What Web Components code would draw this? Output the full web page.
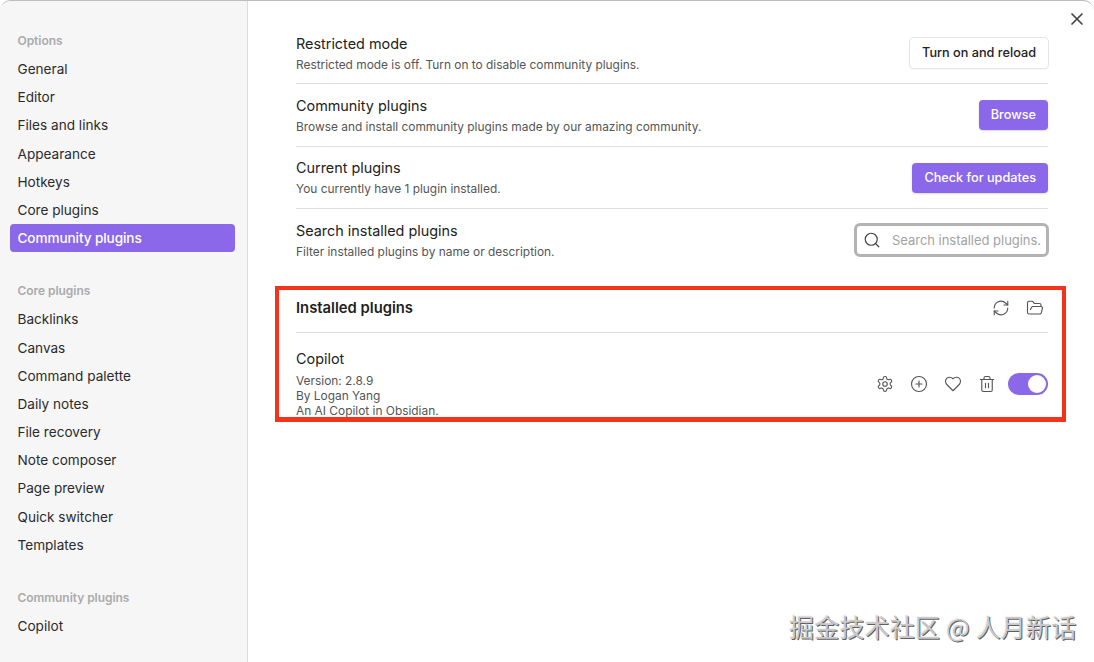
<!DOCTYPE html>
<html lang="en"><head><meta charset="utf-8"><title>Settings</title>
<style>
html,body{margin:0;height:100%;background:#fff}
body{font-family:Inter,"Liberation Sans",sans-serif;color:#222;overflow:hidden}
</style></head><body>
<settings-modal>
  <settings-sidebar slot="side">
    <nav-title first>Options</nav-title>
    <nav-item>General</nav-item><nav-item>Editor</nav-item><nav-item>Files and links</nav-item><nav-item>Appearance</nav-item><nav-item>Hotkeys</nav-item><nav-item>Core plugins</nav-item><nav-item active>Community plugins</nav-item>
    <nav-title>Core plugins</nav-title>
    <nav-item>Backlinks</nav-item><nav-item>Canvas</nav-item><nav-item>Command palette</nav-item><nav-item>Daily notes</nav-item><nav-item>File recovery</nav-item><nav-item>Note composer</nav-item><nav-item>Page preview</nav-item><nav-item>Quick switcher</nav-item><nav-item>Templates</nav-item>
    <nav-title>Community plugins</nav-title>
    <nav-item>Copilot</nav-item>
  </settings-sidebar>
  <setting-row name="Restricted mode" desc="Restricted mode is off. Turn on to disable community plugins." h="83" pad="22"><ui-button>Turn on and reload</ui-button></setting-row>
  <setting-row name="Community plugins" desc="Browse and install community plugins made by our amazing community." h="63"><ui-button cta>Browse</ui-button></setting-row>
  <setting-row name="Current plugins" desc="You currently have 1 plugin installed." h="62"><ui-button cta>Check for updates</ui-button></setting-row>
  <setting-row name="Search installed plugins" desc="Filter installed plugins by name or description." h="62" last><search-box></search-box></setting-row>
  <installed-plugins></installed-plugins>
</settings-modal>
<script>
const I=(d,s=18,w=1.5)=>`<svg width="${s}" height="${s}" viewBox="0 0 24 24" fill="none" stroke="currentColor" stroke-width="${w}" stroke-linecap="round" stroke-linejoin="round">${d}</svg>`;
const def=(n,html,init)=>customElements.define(n,class extends HTMLElement{constructor(){super();this.attachShadow({mode:'open'}).innerHTML=html}
 connectedCallback(){if(init)this.shadowRoot.innerHTML=init(this)}});
def('settings-modal',`<style>
:host{display:flex;position:relative;width:1094px;height:662px;box-sizing:border-box;background:#fff;border-top:1px solid #bdbdbd;border-radius:11px 11px 0 0;overflow:hidden}
.side{display:block;flex:none}
main{flex:1;min-width:0;padding:0 46px 0 48px;display:flex;flex-direction:column}
.close{position:absolute;left:1069px;top:10px;color:#444;width:16px;height:16px}
.mark{position:absolute;left:789px;top:607px;font:25px/36px "Noto Sans CJK SC",sans-serif;color:#c9c9c9;white-space:nowrap;text-shadow:1px 1px 0 #5f5f5f,-1px -1px 0 #f4f4f4;letter-spacing:.2px}
.box{position:absolute;left:275px;top:285px;width:791px;height:136px;box-sizing:border-box;border:4px solid #f5331b;border-bottom-width:5px;pointer-events:none}
</style><div class="side"><slot name="side"></slot></div><main><slot></slot></main>
<svg class="close" viewBox="0 0 16 16" fill="none" stroke="currentColor" stroke-width="1.7" stroke-linecap="round"><path d="M3 3l10 10M13 3L3 13"/></svg>
<div class="box"></div><div class="mark">掘金技术社区 @ 人月新话</div>`);
def('settings-sidebar',`<style>:host{display:block;box-sizing:border-box;width:248px;height:661px;padding:26px 12px 0 10px;background:#f6f6f7;border-right:1px solid #dcdcdc}</style><slot></slot>`);
def('nav-title',`<style>:host{display:block;font:600 12px/17px Inter,"Liberation Sans",sans-serif;letter-spacing:-.05px;color:#ababab;padding:5px 7.5px 6px;margin-top:25px}:host([first]){margin-top:0}</style><slot></slot>`);
def('nav-item',`<style>:host{display:block;height:28.2px;box-sizing:border-box;padding:0 7.5px;border-radius:4px;font:13.6px/28.5px Inter,"Liberation Sans",sans-serif;color:#2b2b2b}:host([active]){background:#8b68ea;color:#fff;font-weight:500;letter-spacing:-.1px}</style><slot></slot>`);
def('setting-row','',el=>`<style>:host{display:flex;align-items:center;justify-content:space-between;box-sizing:border-box;height:${el.getAttribute('h')}px;padding-top:${el.getAttribute('pad')||0}px;border-bottom:1px solid #dedede}
:host([last]){border-bottom:0}
.n{font:14.4px/20px Inter,"Liberation Sans",sans-serif;color:#222}.d{font:11.9px/17px Inter,"Liberation Sans",sans-serif;color:#555;margin-top:2px}
</style><div><div class="n">${el.getAttribute('name')}</div><div class="d">${el.getAttribute('desc')}</div></div><slot></slot>`);
def('ui-button',`<style>:host{display:inline-block;box-sizing:border-box;height:30px;padding:0 12px;border-radius:4px;font:500 12.7px/30px Inter,"Liberation Sans",sans-serif;background:#fff;color:#222;box-shadow:0 0 0 1px #e4e4e4,0 1px 2px rgba(0,0,0,.1)}
:host([cta]){background:#8b68ea;color:#fff;box-shadow:0 1px 2px rgba(0,0,0,.15)}</style><slot></slot>`);
def('search-box',`<style>:host{display:flex;align-items:center;box-sizing:border-box;width:195px;height:34px;margin-right:-1px;padding-left:6px;gap:11px;border:3px solid #b3b3b3;border-radius:6px;background:#fff;color:#444}
span{font:13px Inter,"Liberation Sans",sans-serif;color:#a3a3a3;white-space:nowrap;letter-spacing:-.03px}</style>${I('<circle cx="11" cy="11" r="8"/><path d="M21 21l-4.3-4.3"/>',18,1.6)}<span>Search installed plugins.</span>`);
def('icon-btn','',el=>`<style>:host{display:inline-flex;color:#555}</style>${I(el.getAttribute('d'),+el.getAttribute('s')||18,1.5)}`);
def('ui-toggle',`<style>:host{display:block;position:relative;width:40px;height:22px;border-radius:11px;background:#8b68ea}
i{position:absolute;right:2px;top:2px;width:18px;height:18px;border-radius:50%;background:#fff}</style><i></i>`);
const gear='<path d="M12.2 2h-.4a2 2 0 0 0-2 2v.2a2 2 0 0 1-1 1.7l-.4.2a2 2 0 0 1-2 0l-.2-.1a2 2 0 0 0-2.7.7l-.2.4a2 2 0 0 0 .7 2.7l.2.1a2 2 0 0 1 1 1.7v.5a2 2 0 0 1-1 1.8l-.2.1a2 2 0 0 0-.7 2.7l.2.4a2 2 0 0 0 2.7.7l.2-.1a2 2 0 0 1 2 0l.4.2a2 2 0 0 1 1 1.7v.2a2 2 0 0 0 2 2h.4a2 2 0 0 0 2-2v-.2a2 2 0 0 1 1-1.7l.4-.2a2 2 0 0 1 2 0l.2.1a2 2 0 0 0 2.7-.7l.2-.4a2 2 0 0 0-.7-2.7l-.2-.1a2 2 0 0 1-1-1.8v-.5a2 2 0 0 1 1-1.7l.2-.1a2 2 0 0 0 .7-2.7l-.2-.4a2 2 0 0 0-2.7-.7l-.2.1a2 2 0 0 1-2 0l-.4-.2a2 2 0 0 1-1-1.7V4a2 2 0 0 0-2-2z"/><circle cx="12" cy="12" r="3"/>';
def('installed-plugins',`<style>:host{display:block;margin-top:13px}
.head{display:flex;align-items:center;justify-content:space-between;height:48px;border-bottom:1px solid #dedede}
h2{margin:0;font:600 14.8px/20px Inter,"Liberation Sans",sans-serif;color:#1f1f1f}
.tools{display:flex;gap:16px;margin-right:4px}
.item{display:flex;align-items:center;justify-content:space-between;margin-top:16px}
.n{font:14.4px/20px Inter,"Liberation Sans",sans-serif;color:#222;margin-bottom:4px}.d{font:11.9px/15.2px Inter,"Liberation Sans",sans-serif;color:#555}
.ctl{display:flex;align-items:center;gap:16px;margin-top:1px}
ui-toggle{margin-left:-4px}
</style><div class="head"><h2>Installed plugins</h2><div class="tools">
<icon-btn d='<path d="M21 3v5h-5"/><path d="M3 12a9 9 0 0 1 15-6.7L21 8"/><path d="M21 12a9 9 0 0 1-15 6.7L3 16"/><path d="M8 16H3v5"/>'></icon-btn>
<icon-btn d='<path d="M6 14l1.5-3A2 2 0 0 1 9.2 10H20a2 2 0 0 1 1.9 2.5l-1.500 6A2 2 0 0 1 18.500 20H4a2 2 0 0 1-2-2V5a2 2 0 0 1 2-2h3.900a2 2 0 0 1 1.700.9l.8 1.200A2 2 0 0 0 12.100 6H18a2 2 0 0 1 2 2v2"/>'></icon-btn>
</div></div>
<div class="item"><div><div class="n">Copilot</div><div class="d">Version: 2.8.9</div><div class="d">By Logan Yang</div><div class="d">An AI Copilot in Obsidian.</div></div>
<div class="ctl"><icon-btn d='${gear}'></icon-btn>
<icon-btn d='<circle cx="12" cy="12" r="10"/><path d="M8 12h8M12 8v8"/>'></icon-btn>
<icon-btn d='<path d="M19 14c1.500-1.500 3-3.200 3-5.500A5.500 5.500 0 0 0 16.500 3c-1.800 0-3 .5-4.500 2-1.500-1.500-2.700-2-4.500-2A5.500 5.500 0 0 0 2 8.500c0 2.300 1.500 4 3 5.500l7 7z"/>'></icon-btn>
<icon-btn d='<path d="M3 6h18M19 6v14a2 2 0 0 1-2 2H7a2 2 0 0 1-2-2V6M8 6V4a2 2 0 0 1 2-2h4a2 2 0 0 1 2 2v2M10 11v6M14 11v6"/>'></icon-btn>
<ui-toggle></ui-toggle></div></div>`);
</script>
</body></html>
